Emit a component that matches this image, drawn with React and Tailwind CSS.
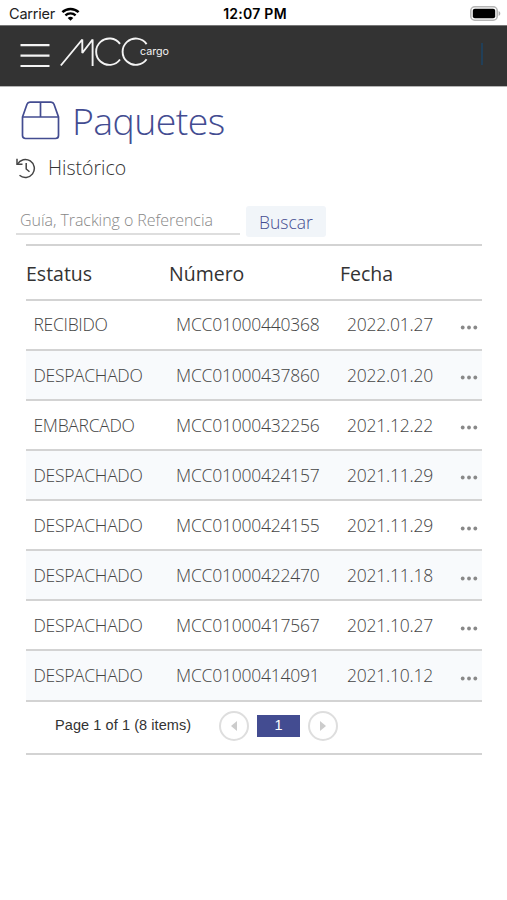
const packages = [
  { status: "RECIBIDO", number: "MCC01000440368", date: "2022.01.27" },
  { status: "DESPACHADO", number: "MCC01000437860", date: "2022.01.20" },
  { status: "EMBARCADO", number: "MCC01000432256", date: "2021.12.22" },
  { status: "DESPACHADO", number: "MCC01000424157", date: "2021.11.29" },
  { status: "DESPACHADO", number: "MCC01000424155", date: "2021.11.29" },
  { status: "DESPACHADO", number: "MCC01000422470", date: "2021.11.18" },
  { status: "DESPACHADO", number: "MCC01000417567", date: "2021.10.27" },
  { status: "DESPACHADO", number: "MCC01000414091", date: "2021.10.12" },
];

const StatusBar = () => (
  <div className="grid h-[25px] grid-cols-3 items-center pl-[9px] pr-[6px] pt-[2px] font-['Inter',sans-serif] text-black">
    <div className="flex items-center gap-[6px]">
      <span className="text-[14.5px] leading-4 tracking-[-0.2px] text-[#222]">Carrier</span>
      <svg width="19" height="14" viewBox="0 0 19 14" fill="none">
        <path d="M1.4 5.2a11.7 11.7 0 0 1 16.2 0" stroke="#000" strokeWidth="2.5" />
        <path d="M4.4 8.4a7.4 7.4 0 0 1 10.2 0" stroke="#000" strokeWidth="2.3" />
        <path d="M9.5 13.8 6.7 11a4 4 0 0 1 5.6 0Z" fill="#000" />
      </svg>
    </div>
    <span className="text-center text-[14px] font-semibold leading-4 tracking-[0.25px]">
      12:07 PM
    </span>
    <svg className="justify-self-end" width="31" height="15" viewBox="0 0 31 15">
      <rect x="0.8" y="0.8" width="26.4" height="13.4" rx="4" fill="#fff" stroke="#b5b5b5" strokeWidth="1.6" />
      <rect x="2.8" y="2.8" width="22.4" height="9.4" rx="2" fill="#000" />
      <path d="M28.6 5v5c1-.4 1.7-1.4 1.7-2.5S29.6 5.4 28.6 5Z" fill="#aaa" />
    </svg>
  </div>
);

const Logo = () => (
  <svg width="112" height="32" viewBox="0 0 112 32" fill="none">
    <g stroke="#f4f4f4" strokeWidth="1.9">
      <path d="M.8 29.5 22.3 3.5V17L32.6 3.5V30" strokeLinejoin="bevel" />
      <path d="M60 7.9A13.2 13.2 0 1 0 60 23.5" />
      <path d="M86.6 8.1A13.2 13.2 0 1 0 86.6 23.3" />
    </g>
    <text
      x="80"
      y="19"
      fill="#f4f4f4"
      fontFamily="Inter, sans-serif"
      fontSize="10.8"
      textLength="29"
      lengthAdjust="spacingAndGlyphs"
    >
      cargo
    </text>
  </svg>
);

const NavBar = () => (
  <div className="flex h-[62px] items-center border-b border-t border-b-[#b5b5b5] border-t-[#777] bg-[#333] pl-5 pr-6">
    <svg width="30" height="26" viewBox="0 0 30 26" stroke="#f4f4f4" strokeWidth="2.2">
      <path d="M.5 2.1h29M.5 12.6h29M.5 23h29" />
    </svg>
    <div className="-mt-2 ml-[10px]">
      <Logo />
    </div>
    <div className="-mt-1 ml-auto h-[22px] w-[2px] bg-[#213f58]" />
  </div>
);

const BoxIcon = () => (
  <svg width="39" height="39" viewBox="0 0 39 39" fill="none" stroke="#434c91" strokeWidth="1.7">
    <path d="M1.5 16 6 3.3Q6.700 1.200 9 1.200h21q2.300 0 3 2.100L37.500 16v18.500q0 3-3 3h-30q-3 0-3-3Z" />
    <path d="M1.5 16h36M19.5 1.2V16" />
  </svg>
);

const HistoryIcon = () => (
  <svg width="21" height="21" viewBox="0 0 21 21" fill="none" stroke="#444" strokeWidth="1.5">
    <path d="M2.5 6A9 9 0 1 1 4.5 17.3" />
    <path d="M2 .8v5.5h5.5" />
    <path d="M11.2 5v6l3.3 2.8" />
  </svg>
);

const PageArrow = ({ flip }) => (
  <button className="flex h-[30px] w-[30px] items-center justify-center rounded-full border-[2.5px] border-[#dedede]">
    <svg className={flip ? "rotate-180" : ""} width="6" height="10" viewBox="0 0 6 10">
      <path d="M6 0v10L0 5Z" fill="#ccc" />
    </svg>
  </button>
);

const App = () => {
  return (
    <div className="min-h-[900px] w-full bg-white font-['Open_Sans',sans-serif]">
      <StatusBar />
      <NavBar />

      <div className="flex items-center pl-[21px] pt-[10px] text-[#434c91]">
        <div className="mt-[-1px]">
          <BoxIcon />
        </div>
        <h1 className="ml-3 text-[37.5px] font-light leading-[48px] tracking-[-0.6px]">Paquetes</h1>
      </div>

      <div className="mt-[9px] flex h-7 items-center pl-[15px]">
        <HistoryIcon />
        <h2 className="ml-3 text-[19.5px] font-light leading-7 text-[#333]">Histórico</h2>
      </div>

      <div className="mt-[24px] flex h-[31px] items-start pl-4">
        <input
          className="h-[29px] w-[224px] border-b-2 border-[#dedede] pl-[4px] text-[16px] font-light tracking-[-0.05px] text-[#555] outline-none placeholder:text-[#888]"
          placeholder="Guía, Tracking o Referencia"
        />
        <button className="ml-[6px] h-[31px] w-[80px] rounded-[3px] bg-[#f1f5f9] pt-px text-[17.5px] font-light text-[#434c91]">
          Buscar
        </button>
      </div>

      <div className="ml-[26px] mt-[7px] w-[456px]">
        <table className="w-full table-fixed border-collapse text-left">
          <colgroup>
            <col className="w-[143px]" />
            <col className="w-[171px]" />
            <col className="w-[113px]" />
            <col />
          </colgroup>
          <thead>
            <tr className="h-[54.5px] border-y-2 border-[#d3d3d3] text-[19.5px] text-[#333]">
              <th className="pt-[2px] font-normal">Estatus</th>
              <th className="pt-[2px] font-normal">Número</th>
              <th className="pt-[2px] font-normal">Fecha</th>
              <th></th>
            </tr>
          </thead>
          <tbody>
            {packages.map((item) => (
              <tr
                key={item.number}
                className="h-[50.125px] border-b-2 border-[#d3d3d3] text-[17.5px] font-light tracking-[-0.22px] text-[#444] even:bg-[#f8fafc]"
              >
                <td className="pl-[7.5px] tracking-[-0.3px]">{item.status}</td>
                <td className="pl-[7px]">{item.number}</td>
                <td className="pl-[7px]">{item.date}</td>
                <td className="pl-[7px] pt-[6px]">
                  <svg width="18" height="5" viewBox="0 0 18 5" fill="#888">
                    <circle cx="2.7" cy="2.5" r="1.9" />
                    <circle cx="9" cy="2.5" r="1.9" />
                    <circle cx="15.3" cy="2.5" r="1.9" />
                  </svg>
                </td>
              </tr>
            ))}
          </tbody>
        </table>

        <div className="flex h-[53.5px] items-center border-b-2 border-[#d3d3d3] pb-[2px] pl-[29px] font-['Liberation_Sans',sans-serif] text-[14.5px] text-[#333]">
          <span className="w-[164px] whitespace-nowrap tracking-[0.08px]">Page 1 of 1 (8 items)</span>
          <PageArrow />
          <span className="mx-2 flex h-[22px] w-[43px] items-center justify-center bg-[#434c91] text-white">
            1
          </span>
          <PageArrow flip />
        </div>
      </div>
    </div>
  );
};

export default App;
